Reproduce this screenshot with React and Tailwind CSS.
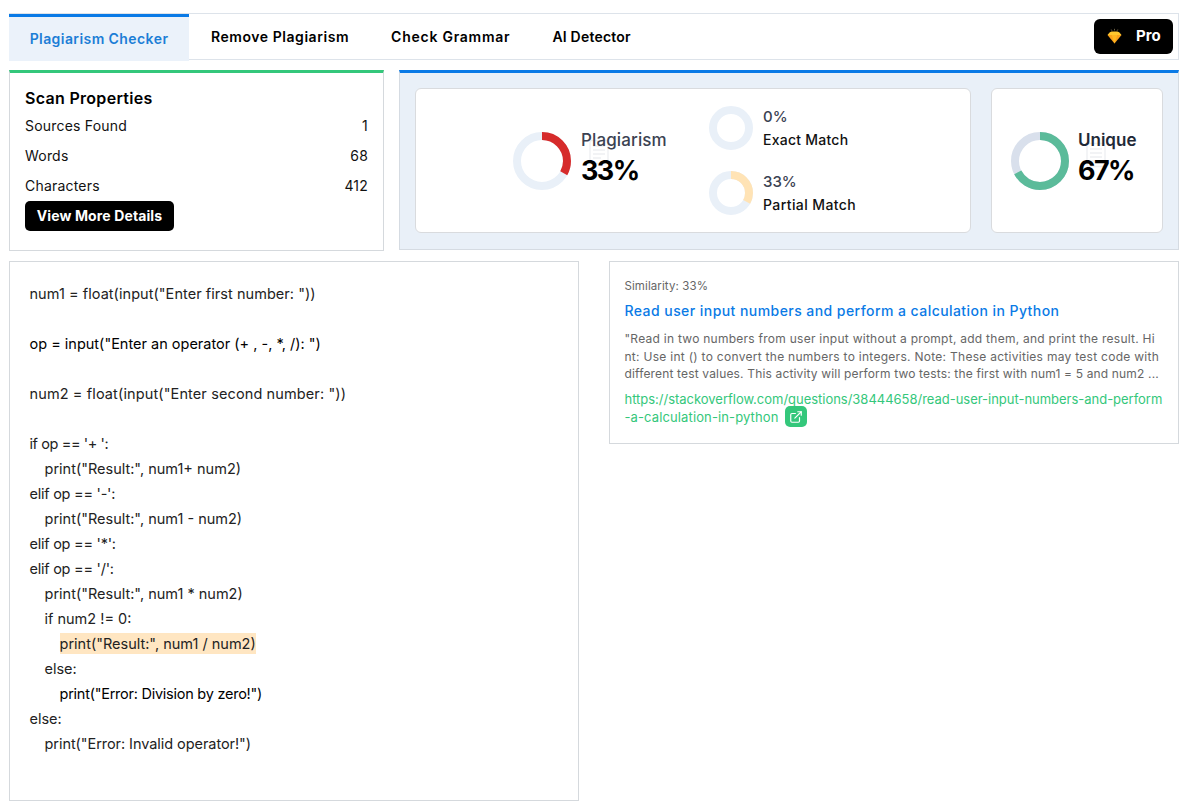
import React from "react";
import { ExternalLink } from "lucide-react";

function Donut({ size, stroke, pct, color, track }) {
  const r = (size - stroke) / 2;
  const c = 2 * Math.PI * r;
  return (
    <svg width={size} height={size} viewBox={`0 0 ${size} ${size}`} className="shrink-0 -rotate-90">
      <circle cx={size / 2} cy={size / 2} r={r} fill="none" stroke={track} strokeWidth={stroke} />
      {pct > 0 && (
        <circle cx={size / 2} cy={size / 2} r={r} fill="none" stroke={color} strokeWidth={stroke}
          strokeDasharray={`${(c * pct) / 100} ${c}`} />
      )}
    </svg>
  );
}

function Gem() {
  return (
    <svg width="15" height="17" viewBox="0 0 16 17">
      <path d="M3 4 5 3.2 11 3.2 13 4 15.5 7 0.5 7Z" fill="#ffc62e" />
      <path d="M0.5 7 15.5 7 8 16Z" fill="#f9a01b" />
      <path d="M5 7 11 7 8 16Z" fill="#ffb51f" />
      <path d="M4.5 1 5.3 2.4M8 0.3V2M11.5 1 10.7 2.4" stroke="#8a7a55" strokeWidth="0.8" />
    </svg>
  );
}

function Watermark({ className }) {
  return (
    <svg width="22" height="26" viewBox="0 0 22 26" className={`absolute ${className}`} fill="none" stroke="#eef0f2" strokeWidth="1.4">
      <rect x="2" y="1.5" width="18" height="23" rx="1.5" />
      <path d="M5 7h12M5 11h12M5 15h12M5 19h8" />
    </svg>
  );
}

const rows = [["Sources Found", "1"], ["Words", "68"], ["Characters", "412"]];

const code = [
  { ind: "", t: "num1 = float(input(\"Enter first number: \"))", cls: "tracking-[0.05px]" },
  { ind: "", t: "" },
  { ind: "", t: "op = input(\"Enter an operator (+ , -, *, /): \")", cls: "text-black" },
  { ind: "", t: "" },
  { ind: "", t: "num2 = float(input(\"Enter second number: \"))", cls: "tracking-[0.12px]" },
  { ind: "", t: "" },
  { ind: "", t: "if op == '+ ':", cls: "tracking-[-0.4px]" },
  { ind: "pl-[15px]", t: "print(\"Result:\", num1+ num2)" },
  { ind: "", t: "elif op == '-':", cls: "tracking-[-0.25px]" },
  { ind: "pl-[15px]", t: "print(\"Result:\", num1 - num2)" },
  { ind: "", t: "elif op == '*':", cls: "tracking-[-0.25px]" },
  { ind: "", t: "elif op == '/':", cls: "tracking-[-0.25px]" },
  { ind: "pl-[15px]", t: "print(\"Result:\", num1 * num2)" },
  { ind: "pl-[15px]", t: "if num2 != 0:" },
  { ind: "pl-[30px]", t: "print(\"Result:\", num1 / num2)", hl: true },
  { ind: "pl-[15px]", t: "else:" },
  { ind: "pl-[30px]", t: "print(\"Error: Division by zero!\")", cls: "text-black tracking-[-0.25px]" },
  { ind: "", t: "else:" },
  { ind: "pl-[15px]", t: "print(\"Error: Invalid operator!\")", cls: "tracking-[-0.06px]" },
];

export default function App() {
  return (
    <div className="min-h-[810px] bg-white pl-[9px] pr-[19px] pt-[13px] text-black font-['Inter','Noto_Sans',sans-serif]">
      <div className="flex h-[47px] items-stretch justify-between border border-[#dde3ea] border-l-0 pr-[5px]">
        <div className="flex items-stretch">
          <div className="flex h-[47px] w-[180px] items-center justify-center border-t-[3px] border-[#0a7ae6] bg-[#ebf2fa] pb-[1px] text-[14px] font-semibold tracking-[0.42px] text-[#1c7ed6]">
            Plagiarism Checker
          </div>
          <div className="flex h-[44px] items-center pl-[22px] text-[14px] font-semibold tracking-[0.55px]">Remove Plagiarism</div>
          <div className="flex h-[44px] items-center pl-[42px] text-[14px] font-semibold tracking-[0.75px]">Check Grammar</div>
          <div className="flex h-[44px] items-center pl-[42px] text-[14px] font-semibold tracking-[0.2px]">AI Detector</div>
        </div>
        <div className="flex items-center">
          <div className="flex h-[35px] w-[79px] items-center rounded-[6px] bg-black pl-[13px] text-white">
            <Gem />
            <span className="ml-[14px] text-[15px] font-bold">Pro</span>
          </div>
        </div>
      </div>

      <div className="mt-[10px] flex items-start gap-[15px]">
        <div className="h-[181px] w-[375px] border border-t-[3px] border-[#d5d9dd] border-t-[#34c77b] px-[15px] pt-[13px]">
          <div className="text-[16px] font-semibold leading-[24px] tracking-[0.3px]">Scan Properties</div>
          <div className="mt-[0.5px]">
            {rows.map(([k, v]) => (
              <div key={k} className="flex h-[30px] items-center justify-between text-[14px] tracking-[0.2px] text-[#111]">
                <span>{k}</span>
                <span>{v}</span>
              </div>
            ))}
          </div>
          <div className="flex h-[30px] w-[149px] items-center justify-center rounded-[5px] bg-black text-[14px] font-bold tracking-[0.12px] text-white">
            View More Details
          </div>
        </div>

        <div className="flex h-[180px] flex-1 gap-[20px] border-x border-b border-t-[3px] border-x-[#d5dbe2] border-b-[#d5dbe2] border-t-[#0a7ae6] bg-[#e9f0f8] pl-[15px] pr-[15px] pt-[15px]">
          <div className="flex h-[145px] w-[556px] items-center rounded-[6px] border border-[#d9dbde] bg-white pl-[97px]">
            <Donut size={58} stroke={8} pct={33} color="#d62b2b" track="#e9f0f8" />
            <div className="relative ml-[10px] w-[128px] pb-[2px]">
              <Watermark className="left-[7px] top-[10px]" />
              <div className="relative text-[17px] font-medium leading-[22px] tracking-[0.12px] text-[#3b4252]">Plagiarism</div>
              <div className="relative text-[27px] font-bold leading-[40px] tracking-[-1.6px]">33%</div>
            </div>
            <div className="flex flex-col gap-[21px]">
              <div className="flex h-[44px] items-center">
                <Donut size={44} stroke={8} pct={0} color="#ffe3b5" track="#e9f0f8" />
                <div className="ml-[10px] pt-[1px]">
                  <div className="text-[15px] font-medium leading-[22px] text-[#3b4252]">0%</div>
                  <div className="text-[14px] font-medium leading-[24px] tracking-[0.25px] text-[#111]">Exact Match</div>
                </div>
              </div>
              <div className="flex h-[44px] items-center">
                <Donut size={44} stroke={8} pct={33} color="#ffe3b5" track="#e9f0f8" />
                <div className="ml-[10px] pt-[1px]">
                  <div className="text-[15px] font-medium leading-[22px] text-[#3b4252]">33%</div>
                  <div className="text-[14px] font-medium leading-[24px] tracking-[0.4px] text-[#111]">Partial Match</div>
                </div>
              </div>
            </div>
          </div>
          <div className="flex h-[145px] w-[172px] items-center rounded-[6px] border border-[#d9dbde] bg-white pl-[19px]">
            <Donut size={58} stroke={8} pct={67} color="#5bbb9a" track="#d9e0ec" />
            <div className="relative ml-[9px] pb-[2px]">
              <Watermark className="left-[7px] top-[13px]" />
              <div className="relative text-[17px] font-semibold leading-[22px] text-[#1f2937]">Unique</div>
              <div className="relative text-[27px] font-bold leading-[40px] tracking-[-1.6px]">67%</div>
            </div>
          </div>
        </div>
      </div>

      <div className="mt-[10px] flex items-start gap-[30px]">
        <div className="h-[540px] w-[570px] border border-[#d5d9dd] pl-[19.5px] pt-[19px] text-[14.5px] leading-[25px] text-[#222]">
          {code.map((l, i) => (
            <div key={i} className={`h-[25px] ${l.ind} ${l.cls || ""}`}>
              {l.hl ? <span className="bg-[#ffe6c2] py-[2px]">{l.t}</span> : l.t}
            </div>
          ))}
        </div>
        <div className="h-[183px] w-[570px] border border-[#d5d9dd] pl-[14.5px] pt-[15px]">
          <div className="text-[11.5px] leading-[18px] tracking-[0.1px] text-[#666]">Similarity: 33%</div>
          <div className="mt-[6px] text-[14px] font-medium leading-[20px] tracking-[0.44px] text-[#0a7ae6]">
            Read user input numbers and perform a calculation in Python
          </div>
          <div className="mt-[9px] text-[12px] leading-[17.5px] text-[#666]">
            <div className="tracking-[0.26px]">"Read in two numbers from user input without a prompt, add them, and print the result. Hi</div>
            <div className="tracking-[0.28px]">nt: Use int () to convert the numbers to integers. Note: These activities may test code with</div>
            <div className="tracking-[0.16px]">different test values. This activity will perform two tests: the first with num1 = 5 and num2 ...</div>
          </div>
          <div className="mt-[7px] text-[13px] leading-[18px] tracking-[-0.02px] text-[#34c77b]">
            <div>https://stackoverflow.com/questions/38444658/read-user-input-numbers-and-perform</div>
            <div className="flex h-[18px] items-center">
              <span className="tracking-[0.12px]">-a-calculation-in-python</span>
              <span className="ml-[6px] flex h-[21px] w-[22px] items-center justify-center rounded-[5px] bg-[#34c77b] text-white">
                <ExternalLink size={14} />
              </span>
            </div>
          </div>
        </div>
      </div>
    </div>
  );
}
